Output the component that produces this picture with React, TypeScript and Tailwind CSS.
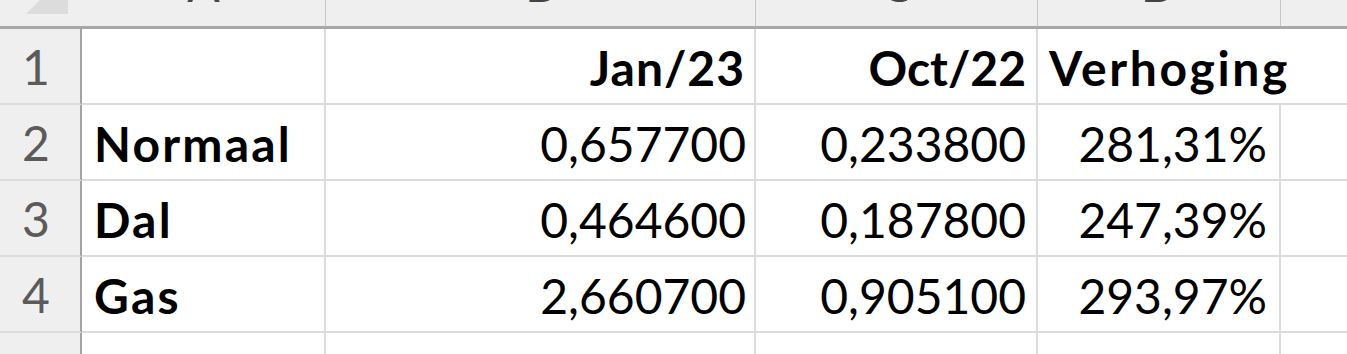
import React from 'react';

type Row = {
  n: number;
  label: string;
  jan: string;
  oct: string;
  pct: string;
};

const rows: Row[] = [
  { n: 2, label: 'Normaal', jan: '0,657700', oct: '0,233800', pct: '281,31%' },
  { n: 3, label: 'Dal', jan: '0,464600', oct: '0,187800', pct: '247,39%' },
  { n: 4, label: 'Gas', jan: '2,660700', oct: '0,905100', pct: '293,97%' },
];

const font = { fontFamily: 'Lato, "Open Sans", sans-serif' };

function RowHead({ n }: { n?: number }) {
  return (
    <div className="w-[82px] shrink-0 bg-[#efefef] border-r-2 border-r-[#a3a3a3] border-b-2 border-b-[#dcdcdc] flex items-end pl-[22px] pb-[12px] text-[#5b5b5b] text-[48px] leading-none">
      {n}
    </div>
  );
}

export default function App() {
  return (
    <div className="w-[1347px] h-[354px] overflow-hidden bg-white text-black" style={font}>
      {/* column letters, cut off at the top */}
      <div className="flex h-[29px] bg-[#efefef] border-b-[3px] border-b-[#a8a8a8]">
        <div className="w-[82px] shrink-0 relative">
          <svg className="absolute left-0 top-0" width="80" height="26" viewBox="0 0 80 26">
            <polygon points="40,0 68,0 68,14 26,14" fill="#dcdcdc" />
          </svg>
        </div>
        {['A', 'B', 'C', 'D'].map((c, i) => (
          <div
            key={c}
            className={`shrink-0 border-r border-r-[#c8c8c8] overflow-hidden flex items-end justify-center pb-[18px] text-[48px] leading-none text-[#444] ${
              i === 0 ? 'w-[244px]' : i === 1 ? 'w-[430px]' : i === 2 ? 'w-[282px]' : 'w-[243px]'
            }`}
          >
            {c}
          </div>
        ))}
        <div className="flex-1" />
      </div>

      {/* row 1 */}
      <div className="flex h-[76px]">
        <RowHead n={1} />
        <div className="w-[244px] shrink-0 border-r-2 border-[#dcdcdc] border-b-2" />
        <div className="w-[430px] shrink-0 border-r-2 border-b-2 border-[#dcdcdc] flex items-end justify-end pr-[9px] pb-[11px] font-bold text-[48px] leading-none tracking-[1px]">
          Jan/23
        </div>
        <div className="w-[282px] shrink-0 border-r-2 border-b-2 border-[#dcdcdc] flex items-end justify-end pr-[10px] pb-[11px] font-bold text-[48px] leading-none">
          Oct/22
        </div>
        <div className="flex-1 border-b-2 border-[#dcdcdc] flex items-end pl-[11px] pb-[11px] font-bold text-[48px] leading-none whitespace-nowrap tracking-[2.6px]">
          Verhoging
        </div>
      </div>

      {rows.map((r) => (
        <div key={r.n} className="flex h-[76px]">
          <RowHead n={r.n} />
          <div className="w-[244px] shrink-0 border-r-2 border-b-2 border-[#dcdcdc] flex items-end pl-[12px] pb-[11px] font-bold text-[48px] leading-none tracking-[2.2px]">
            {r.label}
          </div>
          <div className="w-[430px] shrink-0 border-r-2 border-b-2 border-[#dcdcdc] flex items-end justify-end pr-[8px] pb-[11px] text-[48px] leading-none">
            {r.jan}
          </div>
          <div className="w-[282px] shrink-0 border-r-2 border-b-2 border-[#dcdcdc] flex items-end justify-end pr-[10px] pb-[11px] text-[48px] leading-none">
            {r.oct}
          </div>
          <div className="w-[243px] shrink-0 border-r-2 border-b-2 border-[#dcdcdc] flex items-end justify-end pr-[12px] pb-[11px] text-[48px] leading-none">
            {r.pct}
          </div>
          <div className="flex-1 border-b-2 border-[#dcdcdc]" />
        </div>
      ))}

      {/* row 5 */}
      <div className="flex h-[40px]">
        <RowHead />
        <div className="w-[244px] shrink-0 border-r-2 border-[#dcdcdc]" />
        <div className="w-[430px] shrink-0 border-r-2 border-[#dcdcdc]" />
        <div className="w-[282px] shrink-0 border-r-2 border-[#dcdcdc]" />
        <div className="w-[243px] shrink-0 border-r-2 border-[#dcdcdc]" />
        <div className="flex-1" />
      </div>
    </div>
  );
}
